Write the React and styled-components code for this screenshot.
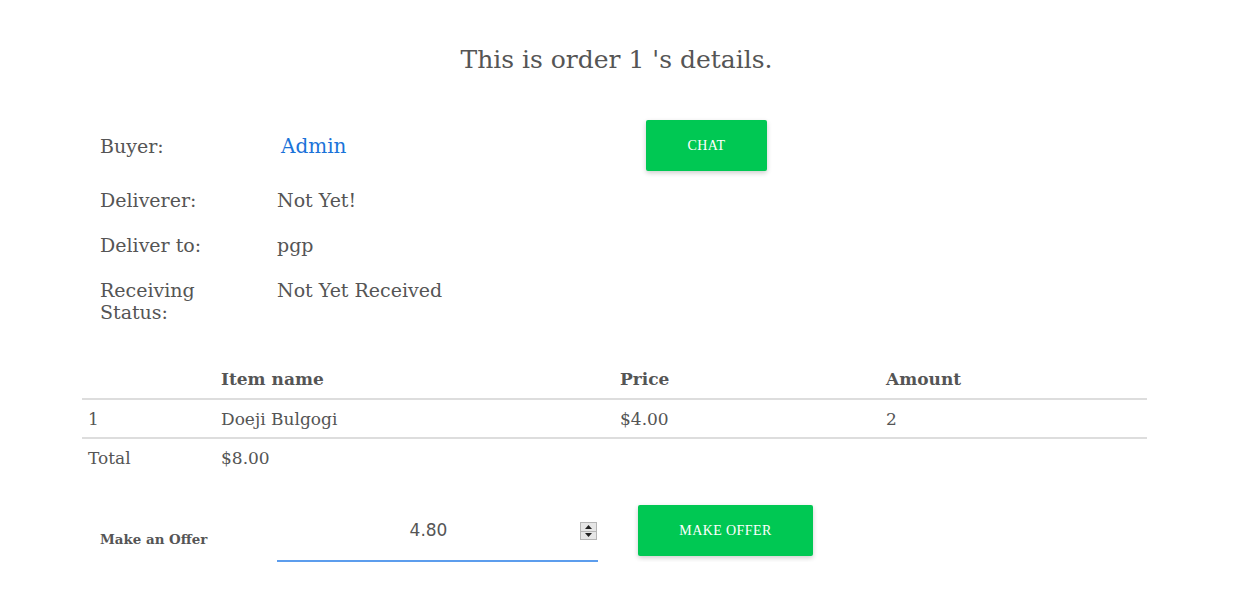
import styled, { createGlobalStyle } from 'styled-components';

const GlobalStyle = createGlobalStyle`
  body {
    margin: 0;
    background: #fff;
    font-family: "DejaVu Serif", "Liberation Serif", serif;
    color: #555;
  }
`;

const items = [{ id: 1, name: 'Doeji Bulgogi', price: 4, amount: 2 }];

const App = () => {
  const total = items.reduce((sum, i) => sum + i.price * i.amount, 0);
  return (
    <Page>
      <GlobalStyle />
      <Title>This is order 1 's details.</Title>
      <Info>
        <InfoRow $center>
          <Label>Buyer:</Label>
          <Value>
            <BuyerLink href="#">Admin</BuyerLink>
          </Value>
          <Button $width={121}>CHAT</Button>
        </InfoRow>
        <InfoRow $gap={18}>
          <Label>Deliverer:</Label>
          <Value>Not Yet!</Value>
        </InfoRow>
        <InfoRow $gap={23}>
          <Label>Deliver to:</Label>
          <Value>pgp</Value>
        </InfoRow>
        <InfoRow $gap={23}>
          <Label>Receiving Status:</Label>
          <Value>Not Yet Received</Value>
        </InfoRow>
      </Info>

      <Table>
        <thead>
          <tr>
            <Th $width={121}></Th>
            <Th $width={387}>Item name</Th>
            <Th $width={254}>Price</Th>
            <Th>Amount</Th>
          </tr>
        </thead>
        <tbody>
          {items.map((item) => (
            <tr key={item.id}>
              <Td $border>{item.id}</Td>
              <Td $border>{item.name}</Td>
              <Td $border>${item.price.toFixed(2)}</Td>
              <Td $border>{item.amount}</Td>
            </tr>
          ))}
          <tr>
            <Td>Total</Td>
            <Td>${total.toFixed(2)}</Td>
            <Td></Td>
            <Td></Td>
          </tr>
        </tbody>
      </Table>

      <OfferRow>
        <OfferLabel>Make an Offer</OfferLabel>
        <InputWrap>
          <OfferInput type="number" step="0.01" defaultValue="4.80" autoFocus />
          <Spinner>
            <SpinHalf>
              <svg width="7" height="4" viewBox="0 0 7 4">
                <path d="M3.5 0 L7 4 L0 4 Z" fill="#222" />
              </svg>
            </SpinHalf>
            <SpinHalf>
              <svg width="7" height="4" viewBox="0 0 7 4">
                <path d="M0 0 L7 0 L3.5 4 Z" fill="#222" />
              </svg>
            </SpinHalf>
          </Spinner>
        </InputWrap>
        <Button $width={175}>MAKE OFFER</Button>
      </OfferRow>
    </Page>
  );
};

export default App;

const Page = styled.div`
  padding: 44px 103px 0 82px;
`;

const Title = styled.h1`
  margin: 0 0 44px 0;
  text-align: center;
  font-size: 25px;
  font-weight: normal;
  line-height: 32px;
  color: #555;
  padding-left: 4px;
`;

const Info = styled.div`
  padding-left: 18px;
  display: flex;
  flex-direction: column;
`;

const InfoRow = styled.div`
  display: flex;
  align-items: ${(p) => (p.$center ? 'center' : 'flex-start')};
  margin-top: ${(p) => p.$gap || 0}px;
`;

const Label = styled.div`
  width: 177px;
  font-size: 19px;
  line-height: 22px;
  padding-right: 60px;
  box-sizing: border-box;
`;

const Value = styled.div`
  width: 369px;
  font-size: 19px;
  line-height: 22px;
`;

const BuyerLink = styled.a`
  color: #1a73d9;
  text-decoration: none;
  font-size: 20px;
  padding-left: 4px;
`;

const Button = styled.button`
  width: ${(p) => p.$width}px;
  height: 51px;
  border: none;
  border-radius: 2px;
  background: #00c853;
  color: #fff;
  font-family: "Liberation Serif", serif;
  font-size: 14px;
  letter-spacing: 0.4px;
  box-shadow: 0 2px 5px rgba(0, 0, 0, 0.2);
  cursor: pointer;
`;

const Table = styled.table`
  margin-top: 37px;
  width: 100%;
  border-collapse: collapse;
  font-size: 17px;
`;

const Th = styled.th`
  text-align: left;
  font-weight: bold;
  padding: 0 6px;
  height: 38px;
  width: ${(p) => (p.$width ? `${p.$width}px` : 'auto')};
  border-bottom: 2px solid #ddd;
  vertical-align: middle;
`;

const Td = styled.td`
  padding: 0 6px;
  height: 37px;
  border-bottom: ${(p) => (p.$border ? '2px solid #ddd' : 'none')};
`;

const OfferRow = styled.div`
  display: flex;
  align-items: flex-start;
  margin-top: 29px;
  padding-left: 18px;
`;

const OfferLabel = styled.div`
  width: 177px;
  font-size: 13.4px;
  line-height: 17px;
  font-weight: bold;
  margin-top: 26px;
`;

const InputWrap = styled.div`
  position: relative;
  margin-right: 40px;
`;

const OfferInput = styled.input`
  display: block;
  width: 321px;
  height: 57px;
  box-sizing: border-box;
  border: none;
  border-bottom: 2px solid #5c9ded;
  outline: none;
  font-family: "DejaVu Sans", sans-serif;
  font-size: 17px;
  color: #555;
  caret-color: #222;
  text-align: center;
  padding: 0 18px 6px 0;
  background: transparent;
  -moz-appearance: textfield;

  &::-webkit-inner-spin-button,
  &::-webkit-outer-spin-button {
    -webkit-appearance: none;
    margin: 0;
  }
`;

const Spinner = styled.div`
  position: absolute;
  right: 1px;
  top: 17px;
  width: 15px;
  height: 16px;
  display: flex;
  flex-direction: column;
  border: 1px solid #b5b5b5;
  background: #e6e6e6;
`;

const SpinHalf = styled.div`
  flex: 1;
  display: flex;
  align-items: center;
  justify-content: center;

  & + & {
    border-top: 1px solid #b5b5b5;
  }
`;
